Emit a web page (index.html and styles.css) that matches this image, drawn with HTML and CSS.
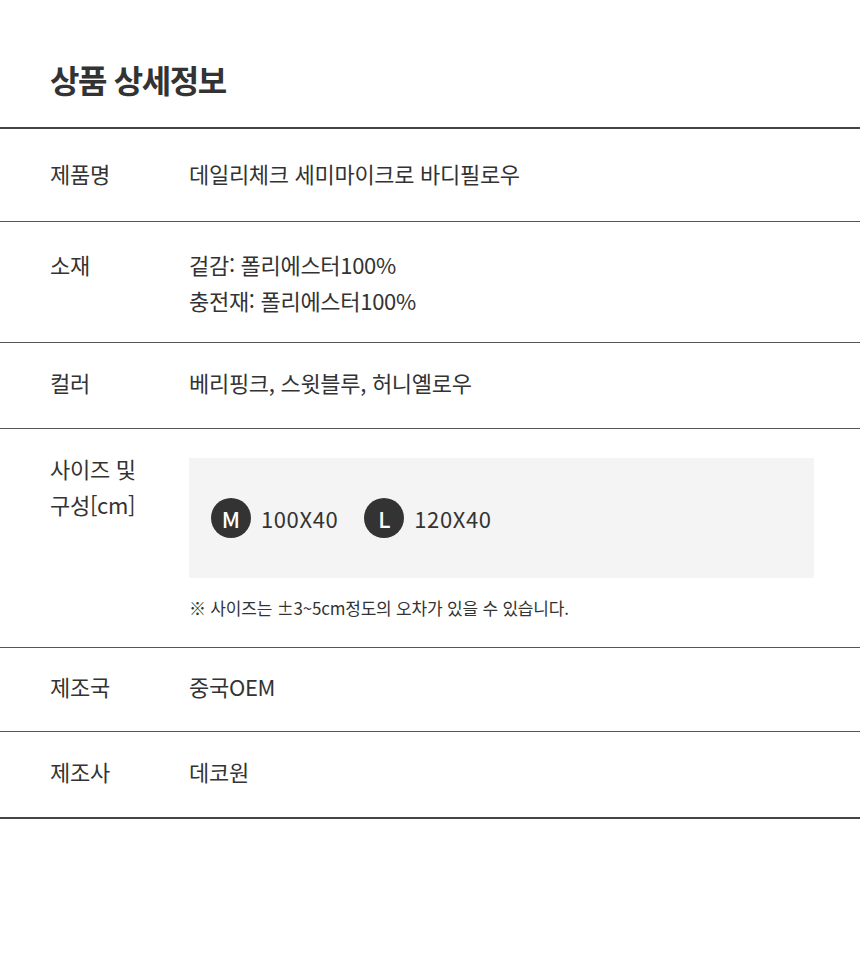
FILE: index.html
```html
<!DOCTYPE html>
<html lang="ko">
<head>
<meta charset="utf-8">
<title>상품 상세정보</title>
<link rel="stylesheet" href="styles.css">
</head>
<body>
<section class="detail">
  <h2 class="title">상품 상세정보</h2>
  <div class="table">
    <div class="row row-first">
      <div class="label">제품명</div>
      <div class="value">데일리체크 세미마이크로 바디필로우</div>
    </div>
    <div class="row row-two">
      <div class="label">소재</div>
      <div class="value">겉감: 폴리에스터100%<br>충전재: 폴리에스터100%</div>
    </div>
    <div class="row">
      <div class="label">컬러</div>
      <div class="value">베리핑크, 스윗블루, 허니옐로우</div>
    </div>
    <div class="row row-size">
      <div class="label">사이즈 및<br>구성[cm]</div>
      <div class="value">
        <div class="size-box">
          <div class="size"><span class="badge">M</span><span class="dim">100X40</span></div>
          <div class="size"><span class="badge">L</span><span class="dim">120X40</span></div>
        </div>
        <p class="note">※ 사이즈는 ±3~5cm정도의 오차가 있을 수 있습니다.</p>
      </div>
    </div>
    <div class="row row-short">
      <div class="label">제조국</div>
      <div class="value">중국OEM</div>
    </div>
    <div class="row">
      <div class="label">제조사</div>
      <div class="value">데코원</div>
    </div>
  </div>
</section>
</body>
</html>
```
FILE: styles.css
```css
* { box-sizing: border-box; }
html, body { margin: 0; padding: 0; background: #fff; }
body {
  font-family: "Noto Sans CJK KR", "Noto Sans", sans-serif;
  color: #333;
}
.detail { width: 860px; }
.title {
  margin: 0;
  padding: 57px 50px 25px;
  font-size: 32px;
  line-height: 45px;
  font-weight: 700;
  letter-spacing: -1.4px;
  color: #333;
}
.table {
  border-top: 2px solid #444;
  border-bottom: 2px solid #444;
}
.row {
  display: flex;
  padding: 21px 46px 28px 50px;
  border-top: 1px solid #555;
  font-size: 22px;
  line-height: 36px;
  letter-spacing: -0.3px;
}
.row-first { border-top: none; padding-top: 26px; padding-bottom: 30px; }
.row-two { padding-top: 24px; padding-bottom: 24px; }
.row-short { padding-top: 20px; padding-bottom: 27px; }
.row-size { padding-bottom: 26px; }
.label { width: 139px; flex-shrink: 0; }
.value { flex: 1; }
.size-box {
  margin-top: 8px;
  height: 120px;
  background: #f4f4f4;
  display: flex;
  align-items: center;
  padding-left: 22px;
  gap: 26px;
}
.size { display: flex; align-items: center; gap: 10px; }
.badge {
  width: 40px;
  height: 40px;
  border-radius: 50%;
  background: #333;
  color: #fff;
  display: flex;
  align-items: center;
  justify-content: center;
  font-size: 22px;
  font-weight: 500;
  letter-spacing: 0;
}
.dim { letter-spacing: 0.6px; }
.note {
  margin: 17px 0 0;
  font-size: 17px;
  line-height: 26px;
  letter-spacing: -0.2px;
}
```
